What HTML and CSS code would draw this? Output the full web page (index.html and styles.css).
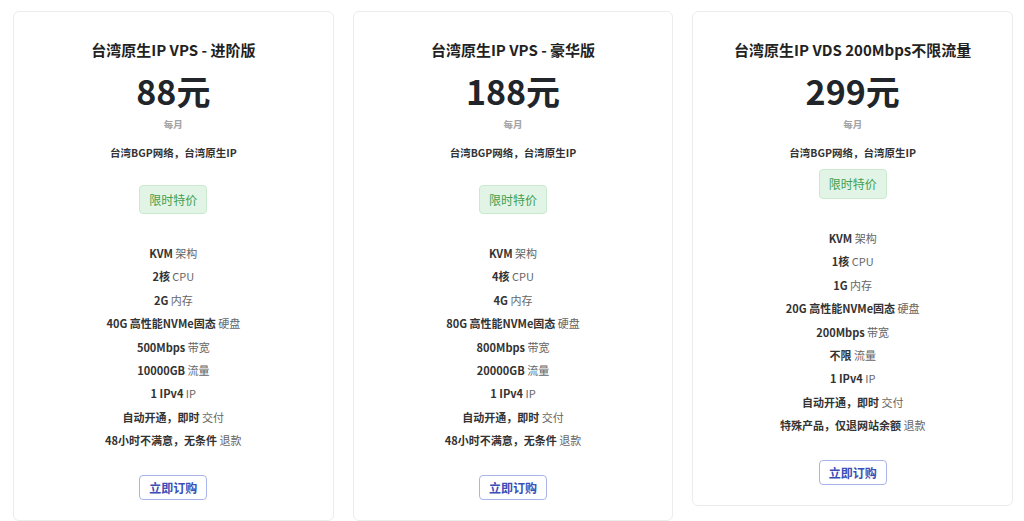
FILE: index.html
```html
<!DOCTYPE html>
<html lang="zh-CN">
<head>
<meta charset="utf-8">
<title>台湾原生IP</title>
<link rel="stylesheet" href="styles.css">
</head>
<body>
<div class="plans">
  <div class="card">
    <h3 class="title">台湾原生IP VPS - 进阶版</h3>
    <div class="price">88元</div>
    <div class="period">每月</div>
    <p class="desc">台湾BGP网络，台湾原生IP</p>
    <span class="badge">限时特价</span>
    <ul class="features">
      <li><b>KVM</b> 架构</li>
      <li><b>2核</b> CPU</li>
      <li><b>2G</b> 内存</li>
      <li><b>40G 高性能NVMe固态</b> 硬盘</li>
      <li><b>500Mbps</b> 带宽</li>
      <li><b>10000GB</b> 流量</li>
      <li><b>1 IPv4</b> IP</li>
      <li><b>自动开通，即时</b> 交付</li>
      <li><b>48小时不满意，无条件</b> 退款</li>
    </ul>
    <button class="buy">立即订购</button>
  </div>
  <div class="card">
    <h3 class="title">台湾原生IP VPS - 豪华版</h3>
    <div class="price">188元</div>
    <div class="period">每月</div>
    <p class="desc">台湾BGP网络，台湾原生IP</p>
    <span class="badge">限时特价</span>
    <ul class="features">
      <li><b>KVM</b> 架构</li>
      <li><b>4核</b> CPU</li>
      <li><b>4G</b> 内存</li>
      <li><b>80G 高性能NVMe固态</b> 硬盘</li>
      <li><b>800Mbps</b> 带宽</li>
      <li><b>20000GB</b> 流量</li>
      <li><b>1 IPv4</b> IP</li>
      <li><b>自动开通，即时</b> 交付</li>
      <li><b>48小时不满意，无条件</b> 退款</li>
    </ul>
    <button class="buy">立即订购</button>
  </div>
  <div class="card">
    <h3 class="title">台湾原生IP VDS 200Mbps不限流量</h3>
    <div class="price">299元</div>
    <div class="period">每月</div>
    <p class="desc">台湾BGP网络，台湾原生IP</p>
    <span class="badge badge-tight">限时特价</span>
    <ul class="features">
      <li><b>KVM</b> 架构</li>
      <li><b>1核</b> CPU</li>
      <li><b>1G</b> 内存</li>
      <li><b>20G 高性能NVMe固态</b> 硬盘</li>
      <li><b>200Mbps</b> 带宽</li>
      <li><b>不限</b> 流量</li>
      <li><b>1 IPv4</b> IP</li>
      <li><b>自动开通，即时</b> 交付</li>
      <li><b>特殊产品，仅退网站余额</b> 退款</li>
    </ul>
    <button class="buy">立即订购</button>
  </div>
</div>
</body>
</html>
```

FILE: styles.css
```css
* { box-sizing: border-box; }

html, body {
  margin: 0;
  padding: 0;
  background: #ffffff;
  font-family: "Noto Sans CJK SC", "Noto Sans", sans-serif;
  color: #212529;
}

body {
  height: 521px;
  overflow: hidden;
}

.plans {
  display: flex;
  align-items: flex-start;
  gap: 19px;
  padding: 11px 11px 0 13px;
}

.card {
  flex: 1 1 0;
  min-width: 0;
  display: flex;
  flex-direction: column;
  align-items: center;
  text-align: center;
  background: #fff;
  border: 1px solid #ececec;
  border-radius: 6px;
  padding: 26px 10px 20px;
}

.title {
  margin: 0;
  font-size: 15px;
  line-height: 24px;
  font-weight: 700;
  color: #222;
}

.price {
  margin-top: 7px;
  font-size: 34px;
  line-height: 44px;
  font-weight: 700;
  color: #212529;
}

.period {
  margin-top: 4px;
  font-size: 9.5px;
  line-height: 14px;
  font-weight: 600;
  color: #a3a3a3;
}

.desc {
  margin: 14px 0 0;
  font-size: 10.5px;
  line-height: 16px;
  font-weight: 600;
  color: #333;
}

.badge {
  display: block;
  margin-top: 24px;
  width: 68px;
  height: 29px;
  line-height: 27px;
  font-size: 12px;
  color: #3f9f52;
  background: #e1f4e5;
  border: 1px solid #c9eacf;
  border-radius: 4px;
}

.badge-tight {
  margin-top: 8px;
  height: 30px;
  line-height: 28px;
}

.features {
  list-style: none;
  margin: 28px 0 0;
  padding: 0;
}

.features li {
  font-size: 11px;
  line-height: 23.4px;
  color: #666;
  white-space: nowrap;
}

.features b {
  font-weight: 700;
  color: #333;
}

.buy {
  margin-top: 22px;
  width: 68px;
  height: 25px;
  padding: 0;
  font-family: inherit;
  font-size: 12px;
  line-height: 23px;
  font-weight: 700;
  color: #3b4db6;
  background: #fff;
  border: 1px solid #a9b5ea;
  border-radius: 4px;
  cursor: pointer;
}
```
